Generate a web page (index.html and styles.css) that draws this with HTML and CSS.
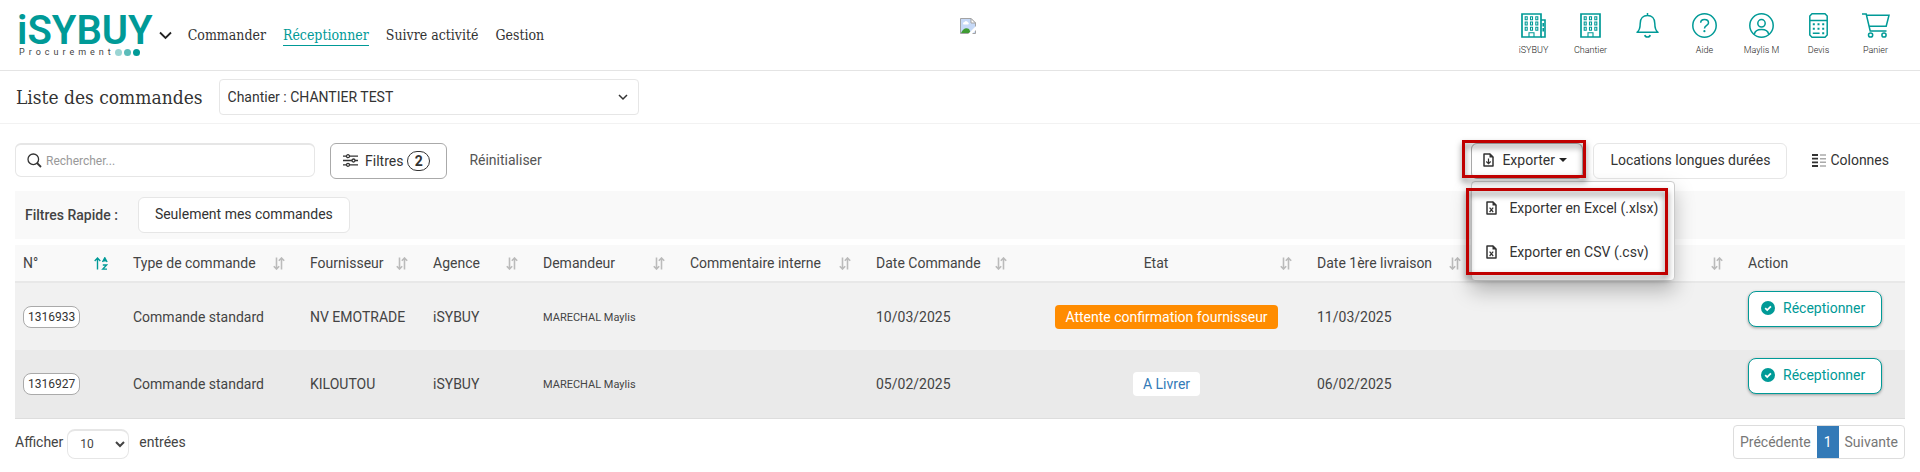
FILE: index.html
```html
<!DOCTYPE html>
<html lang="fr">
<head>
    <meta charset="utf-8">
    <title>iSYBUY - Liste des commandes</title>
    <link rel="stylesheet" href="styles.css">
</head>
<body>
    <svg class="sprite" xmlns="http://www.w3.org/2000/svg">
        <symbol id="i-sort" viewBox="0 0 12 13">
            <path d="M3.5 0.5V12M0.8 9.3L3.5 12L6.2 9.3M8.5 12.5V1M5.8 3.7L8.5 1L11.2 3.7" fill="none" stroke="currentColor" stroke-width="1.6"/>
        </symbol>
        <symbol id="i-check" viewBox="0 0 14 14">
            <circle cx="7" cy="7" r="7" fill="#009a97"/>
            <path d="M4.2 7.2L6.2 9.1L9.9 5.3" fill="none" stroke="#fff" stroke-width="1.8"/>
        </symbol>
        <symbol id="i-building" viewBox="0 0 21 25">
            <path d="M1 1H20V24H1Z" fill="none" stroke="currentColor" stroke-width="1.7"/>
            <path d="M4.2 3.8h2v3h-2zM9.5 3.8h2v3h-2zM14.8 3.8h2v3h-2zM4.2 9h2v3h-2zM9.5 9h2v3h-2zM14.8 9h2v3h-2zM4.2 14.2h2v3h-2zM9.5 14.2h2v3h-2zM14.8 14.2h2v3h-2zM8 24v-4.2h5V24" fill="none" stroke="currentColor" stroke-width="1.1"/>
        </symbol>
        <symbol id="i-excel" viewBox="0 0 11 14">
            <path d="M1 1H7L10 4V13H1Z" fill="none" stroke="currentColor" stroke-width="1.5" stroke-linejoin="round"/>
            <path d="M6.5 0.5V4.5H10.5Z" fill="currentColor"/>
            <path d="M3.6 6.6L7.2 11M7.2 6.6L3.6 11" stroke="currentColor" stroke-width="1.2"/>
        </symbol>
    </svg>

    <header class="topbar">
        <div class="topbar-left">
            <a href="#" class="logo">
                <span class="logo-name">iSYBUY</span>
                <span class="logo-tagline">Procurement<i class="dot dot-light"></i><i class="dot dot-mid"></i><i class="dot"></i></span>
            </a>
            <button class="logo-toggle" aria-label="Changer de module">
                <svg width="13" height="9" viewBox="0 0 13 9"><path d="M1 1.5L6.5 7L12 1.5" fill="none" stroke="currentColor" stroke-width="1.8"/></svg>
            </button>
            <nav class="main-nav">
                <a href="#">Commander</a>
                <a href="#" class="active">Réceptionner</a>
                <a href="#">Suivre activité</a>
                <a href="#">Gestion</a>
            </nav>
        </div>
        <div class="client-logo">
            <svg width="16" height="16" viewBox="0 0 16 16">
                <path d="M0.5 0.5H11L15.5 5V15.5H0.5Z" fill="#c6d9f7" stroke="#a3a3a3"/>
                <path d="M11 0.5V5H15.5Z" fill="#fff" stroke="#a3a3a3"/>
                <path d="M3 5.5a1.5 1.5 0 0 1 1.5-1.5a2 2 0 0 1 3.6 0.6a1 1 0 0 1 0 1.9H3.5z" fill="#fff"/>
                <path d="M1 15C3 10.5 6 9 9 11L11 15Z" fill="#3f9b33"/>
                <path d="M16 8L8.5 15.5V16H12L16 12Z" fill="#fff"/>
            </svg>
        </div>
        <div class="top-icons">
            <a href="#" class="top-icon">
                <svg width="25" height="25" viewBox="0 0 25 25"><use href="#i-building" width="21" height="25"/><path d="M20 7H24V24H20M22.2 10V13.5M22.2 15V18.5" fill="none" stroke="currentColor" stroke-width="1.6"/></svg>
                <span>iSYBUY</span>
            </a>
            <a href="#" class="top-icon">
                <svg width="21" height="25"><use href="#i-building"/></svg>
                <span>Chantier</span>
            </a>
            <a href="#" class="top-icon" aria-label="Notifications">
                <svg width="23" height="25" viewBox="0 0 23 25"><path d="M11.5 0V2.5M1 19.3C3.8 17.3 4.2 15 4.2 10.5C4.2 5.5 7.3 2.5 11.5 2.5S18.8 5.5 18.8 10.5C18.8 15 19.2 17.3 22 19.3ZM8.8 22C9.3 24.8 13.7 24.8 14.2 22" fill="none" stroke="currentColor" stroke-width="1.5" stroke-linejoin="round"/></svg>
            </a>
            <a href="#" class="top-icon">
                <svg width="25" height="25" viewBox="0 0 25 25"><g fill="none" stroke="currentColor" stroke-width="1.5"><circle cx="12.5" cy="12.5" r="11.7"/><path d="M8.7 9.8C8.7 7.6 10.3 6.5 12.5 6.5S16.5 7.8 16.5 9.9C16.5 12.3 12.5 12.5 12.5 15.5"/></g><circle cx="12.4" cy="18.2" r="1.1" fill="currentColor"/></svg>
                <span>Aide</span>
            </a>
            <a href="#" class="top-icon">
                <svg width="25" height="25" viewBox="0 0 25 25"><g fill="none" stroke="currentColor" stroke-width="1.5"><circle cx="12.5" cy="12.5" r="11.7"/><circle cx="12.5" cy="10.3" r="3.7"/><path d="M5.3 21.5C5.8 18 8.3 16.6 12.5 16.6S19.2 18 19.7 21.5"/></g></svg>
                <span>Maylis M</span>
            </a>
            <a href="#" class="top-icon">
                <svg width="19" height="25" viewBox="0 0 19 25"><path d="M3 0.8H16L18.2 3V22L16 24.2H3L0.8 22V3ZM0.8 7.5H18.2" fill="none" stroke="currentColor" stroke-width="1.5"/><path d="M3.8 10.2h2v2h-2zM8.5 10.2h2v2h-2zM13.2 10.2h2v2h-2zM3.8 14.8h2v2h-2zM8.5 14.8h2v2h-2zM13.2 14.8h2v2h-2zM3.8 19.6h6.8v1.4h-6.8zM13.2 19.3h2v2h-2z" fill="currentColor"/></svg>
                <span>Devis</span>
            </a>
            <a href="#" class="top-icon">
                <svg width="28" height="25" viewBox="0 0 28 25"><g fill="none" stroke="currentColor" stroke-width="1.5"><path d="M0 1H4.2L8.2 18H24.5M4.8 2.3H27L24.2 13.2H7"/><circle cx="8.6" cy="22" r="2.1"/><circle cx="22" cy="22" r="2.1"/></g></svg>
                <span>Panier</span>
            </a>
        </div>
    </header>

    <div class="page-header">
        <h1>Liste des commandes</h1>
        <select class="chantier-select" aria-label="Chantier">
            <option>Chantier : CHANTIER TEST</option>
        </select>
    </div>

    <main class="content">
        <div class="toolbar">
            <label class="search">
                <svg width="15" height="15" viewBox="0 0 15 15"><circle cx="6.3" cy="6.3" r="5.3" fill="none" stroke="#333" stroke-width="1.3"/><path d="M10 10L14 14" stroke="#333" stroke-width="1.8"/></svg>
                <input type="text" placeholder="Rechercher..." aria-label="Rechercher">
            </label>
            <button class="btn btn-dark btn-filters">
                <svg width="15" height="13" viewBox="0 0 15 13"><g fill="#fff" stroke="#333" stroke-width="1.3"><path d="M0 2.2H15M0 6.5H15M0 10.8H15"/><circle cx="5" cy="2.2" r="1.5"/><circle cx="10.5" cy="6.5" r="1.5"/><circle cx="5" cy="10.8" r="1.5"/></g></svg>
                <span>Filtres</span><span class="count">2</span>
            </button>
            <button class="btn-link">Réinitialiser</button>

            <div class="toolbar-right">
                <div class="dropdown">
                    <button class="btn btn-dark btn-export">
                        <svg width="11" height="14" viewBox="0 0 11 14"><path d="M1 1H7L10 4V13H1Z" fill="none" stroke="currentColor" stroke-width="1.5" stroke-linejoin="round"/><path d="M6.5 0.5V4.5H10.5Z" fill="currentColor"/><path d="M5.5 5.5V10.5M3.3 8.5L5.5 10.7L7.7 8.5" fill="none" stroke="currentColor" stroke-width="1.2"/></svg>
                        <span>Exporter</span><i class="caret"></i>
                    </button>
                    <div class="highlight highlight-button"></div>
                    <div class="dropdown-menu">
                        <a href="#"><svg width="11" height="14"><use href="#i-excel"/></svg>Exporter en Excel (.xlsx)</a>
                        <a href="#"><svg width="11" height="14"><use href="#i-excel"/></svg>Exporter en CSV (.csv)</a>
                        <div class="highlight highlight-menu"></div>
                    </div>
                </div>
                <button class="btn btn-rentals">Locations longues durées</button>
                <button class="btn-columns">
                    <svg width="14" height="13" viewBox="0 0 14 13"><path d="M0 1H6M0 4.7H6M0 8.3H6M0 12H6" stroke="#333" stroke-width="1.8"/><path d="M8 1H14M8 4.7H14M8 8.3H14M8 12H14" stroke="#aaa" stroke-width="1.4"/></svg>
                    Colonnes
                </button>
            </div>
        </div>

        <div class="quick-filters">
            <strong>Filtres Rapide :</strong>
            <button class="btn">Seulement mes commandes</button>
        </div>

        <table class="orders">
            <colgroup>
                <col class="c-num"><col class="c-type"><col class="c-supplier"><col class="c-agency"><col class="c-user"><col class="c-comment"><col class="c-date"><col class="c-state"><col class="c-delivery"><col class="c-extra"><col class="c-action">
            </colgroup>
            <thead>
                <tr>
                    <th><div><span>N°</span>
                        <svg class="sorted" width="14" height="13" viewBox="0 0 14 13"><path d="M3.5 12.5V1M0.7 3.9L3.5 1.1L6.3 3.9M8.5 5L10.8 0.8L13.1 5M9.3 3.8H12.3M8.8 8H12.6L8.8 12.1H13" fill="none" stroke="currentColor" stroke-width="1.4"/></svg></div></th>
                    <th><div><span>Type de commande</span><svg width="12" height="13"><use href="#i-sort"/></svg></div></th>
                    <th><div><span>Fournisseur</span><svg width="12" height="13"><use href="#i-sort"/></svg></div></th>
                    <th><div><span>Agence</span><svg width="12" height="13"><use href="#i-sort"/></svg></div></th>
                    <th><div><span>Demandeur</span><svg width="12" height="13"><use href="#i-sort"/></svg></div></th>
                    <th><div><span>Commentaire interne</span><svg width="12" height="13"><use href="#i-sort"/></svg></div></th>
                    <th><div><span>Date Commande</span><svg width="12" height="13"><use href="#i-sort"/></svg></div></th>
                    <th class="state"><div><span>Etat</span><svg width="12" height="13"><use href="#i-sort"/></svg></div></th>
                    <th><div><span>Date 1ère livraison</span><svg width="12" height="13"><use href="#i-sort"/></svg></div></th>
                    <th><div><span></span><svg width="12" height="13"><use href="#i-sort"/></svg></div></th>
                    <th>Action</th>
                </tr>
            </thead>
            <tbody>
                <tr>
                    <td><a href="#" class="order-id">1316933</a></td>
                    <td>Commande standard</td>
                    <td>NV EMOTRADE</td>
                    <td>iSYBUY</td>
                    <td><small>MARECHAL Maylis</small></td>
                    <td></td>
                    <td>10/03/2025</td>
                    <td class="state"><span class="badge badge-waiting">Attente confirmation fournisseur</span></td>
                    <td>11/03/2025</td>
                    <td></td>
                    <td class="action"><button class="btn btn-receive"><svg width="14" height="14"><use href="#i-check"/></svg>Réceptionner</button></td>
                </tr>
                <tr>
                    <td><a href="#" class="order-id">1316927</a></td>
                    <td>Commande standard</td>
                    <td>KILOUTOU</td>
                    <td>iSYBUY</td>
                    <td><small>MARECHAL Maylis</small></td>
                    <td></td>
                    <td>05/02/2025</td>
                    <td class="state"><span class="badge badge-deliver">A Livrer</span></td>
                    <td>06/02/2025</td>
                    <td></td>
                    <td class="action"><button class="btn btn-receive"><svg width="14" height="14"><use href="#i-check"/></svg>Réceptionner</button></td>
                </tr>
            </tbody>
        </table>

        <div class="table-footer">
            <label class="page-size">
                Afficher
                <select><option>10</option><option>25</option><option>50</option></select>
                entrées
            </label>
            <nav class="pagination">
                <a href="#">Précédente</a>
                <a href="#" class="current">1</a>
                <a href="#">Suivante</a>
            </nav>
        </div>
    </main>
</body>
</html>
```
FILE: styles.css
```css
* {
    box-sizing: border-box;
}

body {
    margin: 0;
    background: #fff;
    color: #444;
    font-family: Roboto, sans-serif;
    font-size: 14px;
    line-height: 20px;
}

a {
    color: inherit;
    text-decoration: none;
}

button, input, select {
    font-family: inherit;
    font-size: 14px;
    color: inherit;
}

button {
    cursor: pointer;
}

svg {
    display: block;
    flex: none;
}

.sprite {
    display: none;
}

/* Top bar */
.topbar {
    display: grid;
    grid-template-columns: 1fr 32px 1fr;
    height: 71px;
    padding: 0 16px;
    border-bottom: 1px solid #e4e4e4;
}

.topbar-left {
    display: flex;
    align-items: center;
}

.logo {
    display: flex;
    flex-direction: column;
    padding-left: 1px;
    color: #009a97;
}

.logo-name {
    font-size: 40px;
    font-weight: 600;
    line-height: 34px;
}

.logo-tagline {
    display: flex;
    align-items: center;
    padding-left: 2px;
    color: #444;
    font-size: 9px;
    line-height: 8px;
    letter-spacing: 4px;
}

.dot {
    width: 7px;
    height: 7px;
    margin-right: 2px;
    border-radius: 50%;
    background: #009a97;
}

.dot-light {
    background: #9ad4d3;
}

.dot-mid {
    background: #5cbcba;
}

.logo-toggle {
    padding: 0;
    margin: 0 16px 0 6px;
    border: none;
    background: none;
    color: #222;
}

.main-nav {
    display: flex;
    gap: 17px;
    color: #333;
    font-family: "DejaVu Serif Condensed", "DejaVu Serif", serif;
    font-size: 14px;
}

.main-nav .active {
    color: #009a97;
    border-bottom: 1px solid #009a97;
}

.client-logo {
    display: flex;
    justify-content: flex-end;
    padding-top: 18px;
}

.top-icons {
    display: flex;
    justify-content: flex-end;
    padding-top: 13px;
}

.top-icon {
    display: flex;
    flex-direction: column;
    align-items: center;
    gap: 6px;
    width: 57px;
    color: #009a97;
}

.top-icon span {
    color: #222;
    font-size: 9px;
    font-weight: 300;
    line-height: 12px;
}

/* Page header */
.page-header {
    display: flex;
    align-items: center;
    gap: 16px;
    padding: 8px 16px;
    border-bottom: 1px solid #f2f2f2;
}

h1 {
    margin: 0;
    color: #333;
    font-family: "DejaVu Serif Condensed", "DejaVu Serif", serif;
    font-size: 19px;
    font-weight: normal;
    line-height: 28px;
}

.chantier-select {
    appearance: none;
    width: 420px;
    height: 36px;
    padding: 0 8px;
    border: 1px solid #e6e6e6;
    border-radius: 4px;
    background: #fff url("data:image/svg+xml,%3Csvg xmlns='http://www.w3.org/2000/svg' width='10' height='7'%3E%3Cpath d='M1 1L5 5L9 1' fill='none' stroke='%23333' stroke-width='1.5'/%3E%3C/svg%3E") no-repeat right 10px center;
    color: #333;
}

/* Toolbar */
.content {
    padding: 19px 15px 12px;
}

.toolbar {
    display: flex;
    align-items: flex-start;
}

.btn {
    display: flex;
    align-items: center;
    height: 36px;
    padding: 0 16px 2px;
    border: 1px solid #e6e6e6;
    border-radius: 6px;
    background: #fff;
    color: #333;
}

.btn-dark {
    border-color: #aaa;
}

.search {
    display: flex;
    align-items: center;
    gap: 4px;
    width: 300px;
    height: 34px;
    margin-right: 15px;
    padding: 0 11px;
    border: 1px solid #e6e6e6;
    border-top-width: 2px;
    border-radius: 6px;
}

.search input {
    flex: 1;
    min-width: 0;
    padding: 0;
    border: none;
    outline: none;
    font-size: 12px;
}

.search input::placeholder {
    color: #999;
}

.btn-filters {
    padding: 0 16px 1px 12px;
}

.btn-filters svg {
    margin-right: 7px;
}

.count {
    width: 23px;
    margin-left: 4px;
    border: 1px solid #333;
    border-radius: 10px;
    font-weight: 700;
    line-height: 18px;
}

.btn-link {
    height: 36px;
    margin-left: 22px;
    padding: 0 0 2px;
    border: none;
    background: none;
    color: #555;
}

.toolbar-right {
    display: flex;
    margin-left: auto;
}

.dropdown {
    position: relative;
    margin-right: 10px;
}

.btn-export {
    width: 112px;
    padding: 0 11px 2px;
}

.btn-export span {
    margin: 0 4px 0 8px;
}

.caret {
    border: 4px solid transparent;
    border-top-color: #222;
    border-bottom: none;
}

.dropdown-menu {
    position: absolute;
    top: 38px;
    left: 0;
    z-index: 10;
    width: 204px;
    padding: 4px 0 6px;
    border: 1px solid #ccc;
    border-radius: 4px;
    background: #fff;
    box-shadow: 0 10px 20px rgba(0, 0, 0, 0.25);
}

.dropdown-menu a {
    display: flex;
    align-items: center;
    gap: 12px;
    height: 44px;
    padding: 0 14px;
    color: #333;
    white-space: nowrap;
}

.highlight {
    position: absolute;
    border: 3px solid #c00000;
    filter: drop-shadow(0 4px 3px rgba(0, 0, 0, 0.5));
    pointer-events: none;
}

.highlight-button {
    top: -3px;
    left: -9px;
    right: -3px;
    bottom: 1px;
    z-index: 11;
}

.highlight-menu {
    inset: 6px 6px 5px -6px;
}

.btn-columns {
    display: flex;
    align-items: center;
    gap: 4px;
    height: 36px;
    padding: 0 16px 2px 25px;
    border: none;
    background: none;
    color: #333;
}

/* Quick filters */
.quick-filters {
    display: flex;
    align-items: center;
    gap: 20px;
    margin-top: 12px;
    padding: 6px 10px;
    background: #f9f9f9;
}

.quick-filters strong {
    font-weight: 500;
}

/* Orders table */
.orders {
    width: 100%;
    margin-top: 6px;
    table-layout: fixed;
    border-collapse: collapse;
    border-bottom: 1px solid #ddd;
}

.c-num { width: 110px; }
.c-type { width: 177px; }
.c-supplier { width: 123px; }
.c-agency { width: 110px; }
.c-user { width: 147px; }
.c-comment { width: 186px; }
.c-date { width: 156px; }
.c-state { width: 285px; }
.c-delivery { width: 169px; }
.c-extra { width: 262px; }
.c-action { width: 165px; }

.orders th {
    height: 37px;
    padding: 0 8px;
    border-bottom: 2px solid #e8e8e8;
    background: #f9f9f9;
    font-weight: 400;
    text-align: left;
    white-space: nowrap;
}

.orders th div {
    display: flex;
    align-items: center;
    justify-content: space-between;
    padding-right: 9px;
}

.orders th svg {
    color: #bbb;
}

.orders th .sorted {
    color: #009a97;
}

.orders th.state span {
    flex: 1;
    text-align: center;
}

.orders td {
    height: 68px;
    padding: 0 8px;
    background: #f1f1f1;
}

.orders tr:nth-child(2) td {
    background: #eaeaea;
}

.orders td.state {
    text-align: center;
}

.orders td.action {
    padding-top: 8px;
    vertical-align: top;
}

.orders small {
    font-size: 11px;
}

.order-id {
    display: inline-block;
    padding: 0 4px;
    border: 1px solid #aaa;
    border-radius: 8px;
    background: #fff;
    color: #333;
    font-size: 12px;
}

.badge {
    display: inline-block;
    padding: 2px 10px;
    border-radius: 4px;
}

.badge-waiting {
    background: #ff8c00;
    color: #fff;
}

.badge-deliver {
    background: #fff;
    color: #337ab7;
}

.btn-receive {
    gap: 8px;
    padding: 0 16px 2px 12px;
    border-color: #009a97;
    border-radius: 8px;
    color: #009a97;
    box-shadow: 0 1px 3px rgba(0, 0, 0, 0.35);
}

/* Footer */
.table-footer {
    display: flex;
    justify-content: space-between;
    padding-top: 6px;
}

.page-size {
    display: flex;
    align-items: center;
    gap: 4px;
}

.page-size select {
    width: 62px;
    height: 30px;
    margin: 4px 6px 0 0;
    padding: 0 8px;
    border: 1px solid #e6e6e6;
    border-top-width: 2px;
    border-radius: 8px;
    background: #fff;
    font-size: 12px;
}

.pagination {
    display: flex;
    align-self: flex-start;
    border: 1px solid #ddd;
    border-radius: 4px;
    color: #777;
}

.pagination a {
    padding: 6px;
}

.pagination .current {
    padding: 6px 7px;
    background: #337ab7;
    color: #fff;
}
```
